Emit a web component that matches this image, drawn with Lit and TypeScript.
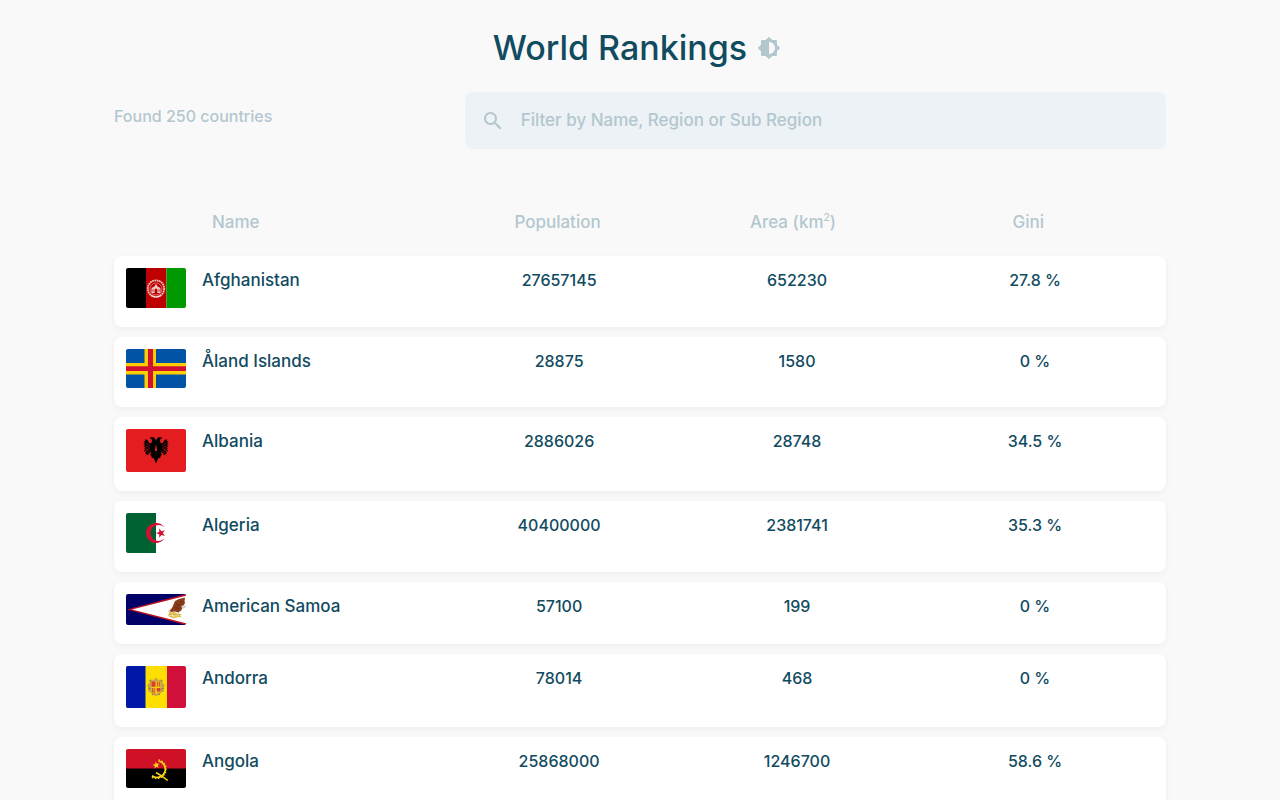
import { LitElement, html, css, svg, nothing, SVGTemplateResult } from "lit";
import { customElement, property, state } from "lit/decorators.js";

interface Country {
  name: string;
  region: string;
  population: number;
  area: number;
  gini: number;
  flagHeight: number;
  flag: SVGTemplateResult;
}

const star = (cx: number, cy: number, r: number, turn = 0): string =>
  Array.from({ length: 10 }, (_, i) => {
    const a = ((turn - 90 + i * 36) * Math.PI) / 180;
    const d = i % 2 ? r * 0.4 : r;
    return `${(cx + d * Math.cos(a)).toFixed(2)},${(cy + d * Math.sin(a)).toFixed(2)}`;
  }).join(" ");

const afghanistan = svg`
  <rect width="20" height="40" fill="#000"/>
  <rect x="20" width="20.4" height="40" fill="#bf0000"/>
  <rect x="40.4" width="19.6" height="40" fill="#009900"/>
  <circle cx="30" cy="20.6" r="8.2" fill="none" stroke="#eebfbb" stroke-width="1.8" stroke-dasharray="1.8 .5"/>
  <circle cx="30" cy="21" r="6" fill="none" stroke="#dc8a86" stroke-width=".8"/>
  <path d="M25.500 25v-4.500l1.500-1.500h1l2-3 2 3h1l1.500 1.500v4.500z" fill="#f0c9c5"/>
  <path d="M28.600 25v-3.500q1.400-2 2.800 0V25zM26.500 21.500h1v2h-1zM32.500 21.500h1v2h-1z" fill="#bf0000"/>
  <path d="M25 27.500q5 3 10 0" fill="none" stroke="#f6dedb" stroke-width="1.200"/>`;

const aland = svg`
  <rect width="60" height="39" fill="#0053a5"/>
  <path d="M18.500 0h11.500v14h30v11.500H30V39H18.500V25.500H0V14h18.500z" fill="#ffce00"/>
  <path d="M22 0h5v17.300h33v4.700H27v17h-5V22H0v-4.700h22z" fill="#d21034"/>`;

const eagleHalf = () => svg`
  <path d="M30.300 13l-1-3-1.300-1.600-2.500-.4-2 1.200 2 .6.600 2.200-1 2.500-2-.8-1.500-2.500-2.600-1.300.6 1.800-1.900.3 1.500 1.200-1.900.8 1.900.9-1.900 1 2 .7-1.800 1.200 2 .5-1.500 1.400 2 .1-2.400 2 1.200.6 3-2 .6.400-3.400 2.700 1.200.4-1 1.400 1.500-.2.200 1.400 1.300-1.200 2.300-2 .8.500-1.300 2.400 1.200.3.600 2.200 1.300.6.300 1z" fill="#000"/>
  <path d="M19.800 14.500l4.200 2M19.200 17.300l4.600 1M19.400 20.200l4.200-.4M21 24l3.800-2.200" stroke="#e41e20" stroke-width=".5" fill="none"/>`;

const albania = svg`
  <rect width="60" height="43" fill="#e41e20"/>
  ${eagleHalf()}
  <g transform="matrix(-1 0 0 1 60 0)">${eagleHalf()}</g>
  <path d="M28 22h4l.8 5-1.300 4-1.500 3.500-1.500-3.500-1.300-4z" fill="#000"/>`;

const algeria = svg`
  <rect width="60" height="40" fill="#fff"/>
  <rect width="30" height="40" fill="#006233"/>
  <path d="M38.300 14.400a10 10 0 1 0 0 11.200 8 8 0 1 1 0-11.200z" fill="#d21034"/>
  <polygon points="${star(34.8, 20.1, 5, -90)}" fill="#d21034"/>`;

const americanSamoa = svg`
  <rect width="60" height="31" fill="#006"/>
  <path d="M60 0v31L1 15.500z" fill="#bd1021"/>
  <path d="M60 1.800v27.400L6 15.500z" fill="#fff"/>
  <path d="M49 7l4-2 6-1.500-.5 3.500.5 2-2 3.500-1.500 3.500-3 2.500-4-1-3.500.5-1.500-1.500 2.500-2.500 1.500-3.500z" fill="#8a3b1c"/>
  <path d="M50 10l4 1.500M49 13.500l4 1M54 7.500l2 1.500" stroke="#5c2812" stroke-width=".8"/>
  <path d="M55 12.500l2.500-1.500 2 .8.300 1.800-2.800 1.200z" fill="#cfd2d8"/>
  <path d="M42 16l2.500 2.500 3-.7 3 1.700 5 .5-1.500 1.500 1.500 1.500-4 .3-4 1-4-1.500-1.500-2 1.500-1.300z" fill="#d9b53a"/>
  <path d="M43.500 21.500l5 .5 4.500-.3M46 18.500l1.500 5" stroke="#fff" stroke-width=".6" fill="none"/>`;

const andorra = svg`
  <rect width="60" height="42" fill="#d0103a"/>
  <rect width="41" height="42" fill="#fedf00"/>
  <rect width="19.500" height="42" fill="#0018a8"/>
  <path d="M24 13.500l3.500.5 2.500-2.500 2.500 2.500 3.500-.5.500 3.500 2.500 2-1.500 3 .5 3.500-3 1-1.500 2.500-3.500 1-3.500-1-1.500-2.500-3-1 .5-3.500-1.500-3 2.500-2z" fill="#c6a54c"/>
  <path d="M23.500 14l2 2M36.500 14l-2 2M22 22l2.500 1M38 22l-2.500 1M26 29l1.500-1.500M34 29l-1.500-1.500" stroke="#86744b" stroke-width="1"/>
  <path d="M25.500 15.500h9v9q-1 3-4.500 3.500-3.500-.5-4.500-3.500z" fill="#e9b626"/>
  <path d="M26 16h3.500v4.500H26zM26.500 22.200v4M28.200 22.200v5M31.500 16v4.500M33.500 16v4.500M31 22.500h3v2.500h-3z" fill="#d6442b" stroke="#d6442b" stroke-width=".9"/>
  <path d="M25.500 21.300h9M30 15.500v12" stroke="#fedf00" stroke-width=".7"/>`;

const angola = svg`
  <rect width="60" height="20" fill="#ce1126"/>
  <rect y="19.500" width="60" height="19.500" fill="#000"/>
  <path d="M32.500 12a8.300 8.300 0 1 1-6.500 14.800" fill="none" stroke="#f9d616" stroke-width="1.700"/>
  <path d="M32.500 10.800a9.500 9.500 0 1 1-7.500 17" fill="none" stroke="#f9d616" stroke-width="1.300" stroke-dasharray="1.500 1.600"/>
  <path d="M30 23.500q5.500 3 11.800 8" fill="none" stroke="#f9d616" stroke-width="1.500"/>
  <polygon points="${star(30.200, 16.200, 3.800, -10)}" fill="#f9d616"/>`;

const countries: Country[] = [
  { name: "Afghanistan", region: "Asia Southern Asia", population: 27657145, area: 652230, gini: 27.8, flagHeight: 40, flag: afghanistan },
  { name: "Åland Islands", region: "Europe Northern Europe", population: 28875, area: 1580, gini: 0, flagHeight: 39, flag: aland },
  { name: "Albania", region: "Europe Southern Europe", population: 2886026, area: 28748, gini: 34.5, flagHeight: 43, flag: albania },
  { name: "Algeria", region: "Africa Northern Africa", population: 40400000, area: 2381741, gini: 35.3, flagHeight: 40, flag: algeria },
  { name: "American Samoa", region: "Oceania Polynesia", population: 57100, area: 199, gini: 0, flagHeight: 31, flag: americanSamoa },
  { name: "Andorra", region: "Europe Southern Europe", population: 78014, area: 468, gini: 0, flagHeight: 42, flag: andorra },
  { name: "Angola", region: "Africa Middle Africa", population: 25868000, area: 1246700, gini: 58.6, flagHeight: 39, flag: angola },
];

type SortKey = "name" | "population" | "area" | "gini";

@customElement("search-input")
class SearchInput extends LitElement {
  static styles = css`
    :host {
      display: block;
    }
    .field {
      display: flex;
      align-items: center;
      gap: 16px;
      padding: 0 16px;
      border-radius: 8px;
      background: #ecf2f5;
      color: #b3c5cd;
    }
    .icon {
      flex: none;
      width: 24px;
      height: 24px;
      fill: currentColor;
    }
    .input {
      flex: 1;
      min-width: 0;
      padding: 16px 0 17px;
      border: 0;
      outline: 0;
      background: transparent;
      color: #114b5f;
      font: inherit;
      font-size: 17px;
      line-height: 24px;
      height: 57px;
      box-sizing: border-box;
    }
    .input::placeholder {
      color: #b3c7cf;
      opacity: 1;
    }
  `;

  render() {
    return html`
      <label class="field">
        <svg class="icon" viewBox="0 0 24 24" aria-hidden="true">
          <path d="M15.5 14h-.79l-.28-.27A6.471 6.471 0 0 0 16 9.500 6.500 6.500 0 1 0 9.500 16c1.610 0 3.090-.590 4.230-1.570l.270.280v.790l5 4.990L20.490 19l-4.990-5zm-6 0C7.010 14 5 11.990 5 9.500S7.010 5 9.500 5 14 7.010 14 9.500 11.990 14 9.500 14z"/>
        </svg>
        <input
          class="input"
          type="text"
          aria-label="Filter by Name, Region or Sub Region"
          placeholder="Filter by Name, Region or Sub Region"
          @input=${this.onInput}
        />
      </label>
    `;
  }

  private onInput(e: Event) {
    const value = (e.target as HTMLInputElement).value;
    this.dispatchEvent(new CustomEvent("filter", { detail: value }));
  }
}

@customElement("countries-table")
class CountriesTable extends LitElement {
  @property({ attribute: false }) rows: Country[] = [];
  @state() private key: SortKey | null = null;

  static styles = css`
    :host {
      display: block;
    }
    .table,
    .head,
    .body {
      display: block;
    }
    .headings,
    .row {
      display: grid;
      grid-template-columns: 33fr 25fr 25fr 25fr;
    }
    .headings {
      grid-template-columns: 4fr 3fr 3fr 3fr;
      padding: 0 20px 0 12px;
      margin-bottom: 22px;
    }
    .heading {
      padding: 0;
      font-weight: 500;
      text-align: center;
    }
    .heading.name {
      padding-left: 86px;
      text-align: left;
    }
    .sort {
      display: inline-block;
      vertical-align: top;
      padding: 0;
      border: 0;
      background: none;
      color: #b3c7cf;
      font: inherit;
      font-size: 17px;
      line-height: 24px;
      cursor: pointer;
    }
    .sup {
      font-size: 10px;
      line-height: 0;
    }
    .body {
      display: flex;
      flex-direction: column;
      gap: 10px;
    }
    .row {
      padding: 12px 12px 19px;
      border-radius: 8px;
      background: #fff;
      box-shadow: 0 2px 6px rgba(0, 0, 0, 0.05);
    }
    .cell {
      padding: 0;
      color: #114b5f;
      text-align: center;
    }
    .cell.name {
      display: flex;
      align-items: flex-start;
      gap: 16px;
      font-size: 17px;
      text-align: left;
    }
    .flag {
      flex: none;
      display: block;
      width: 60px;
      border-radius: 2px;
    }
  `;

  private heading(key: SortKey, label: unknown) {
    return html`<th class="heading ${key}" scope="col">
      <button class="sort" type="button" @click=${() => (this.key = key)}>${label}</button>
    </th>`;
  }

  render() {
    const key = this.key;
    const rows = key
      ? [...this.rows].sort((a, b) =>
          key === "name" ? a.name.localeCompare(b.name) : (b[key] as number) - (a[key] as number))
      : this.rows;
    return html`
      <table class="table" role="table">
        <thead class="head" role="rowgroup">
          <tr class="headings" role="row">
            ${this.heading("name", "Name")}
            ${this.heading("population", "Population")}
            ${this.heading("area", html`Area (km<sup class="sup">2</sup>)`)}
            ${this.heading("gini", "Gini")}
          </tr>
        </thead>
        <tbody class="body" role="rowgroup">
          ${rows.map((c) => html`
            <tr class="row" role="row">
              <td class="cell name">
                <svg class="flag" viewBox="0 0 60 ${c.flagHeight}" role="img" aria-label="${c.name}">${c.flag}</svg>
                <span>${c.name}</span>
              </td>
              <td class="cell">${c.population}</td>
              <td class="cell">${c.area}</td>
              <td class="cell">${c.gini} %</td>
            </tr>`)}
        </tbody>
      </table>
    `;
  }
}

@customElement("app-root")
class AppRoot extends LitElement {
  @state() private filter = "";

  static styles = css`
    :host {
      display: block;
      min-height: 100vh;
      background: #f9f9f9;
      color: #114b5f;
      font-family: "Inter", sans-serif;
      font-size: 16px;
      font-weight: 500;
      line-height: 24px;
    }
    .page {
      box-sizing: border-box;
      max-width: 1100px;
      margin: 0 auto;
      padding: 24px;
    }
    .header {
      display: flex;
      justify-content: center;
      align-items: center;
      gap: 10px;
      padding-right: 6px;
      margin-bottom: 20px;
    }
    .title {
      margin: 0;
      font-size: 34px;
      line-height: 48px;
      font-weight: 500;
    }
    .theme {
      display: flex;
      padding: 0;
      border: 0;
      background: none;
      color: #b3c7cf;
      cursor: pointer;
    }
    .theme-icon {
      width: 24px;
      height: 24px;
      fill: currentColor;
    }
    .toolbar {
      display: grid;
      grid-template-columns: 1fr 2fr;
      margin-bottom: 61px;
    }
    .count {
      margin: 0;
      padding-top: 12px;
      color: #b3c7cf;
    }
  `;

  render() {
    const q = this.filter.trim().toLowerCase();
    const rows = q
      ? countries.filter((c) => `${c.name} ${c.region}`.toLowerCase().includes(q))
      : countries;
    return html`
      <main class="page">
        <header class="header">
          <h1 class="title">World Rankings</h1>
          <button class="theme" type="button" aria-label="Switch theme">
            <svg class="theme-icon" viewBox="0 0 24 24" aria-hidden="true">
              <path d="M20 15.310l2.600-2.600a1 1 0 0 0 0-1.410L20 8.690V5a1 1 0 0 0-1-1h-3.690l-2.600-2.600a1 1 0 0 0-1.410 0L8.690 4H5a1 1 0 0 0-1 1v3.690l-2.600 2.600a1 1 0 0 0 0 1.410L4 15.300V19a1 1 0 0 0 1 1h3.690l2.600 2.600a1 1 0 0 0 1.410 0l2.600-2.600H19a1 1 0 0 0 1-1v-3.690zM12 18V6c3.310 0 6 2.690 6 6s-2.690 6-6 6z"/>
            </svg>
          </button>
        </header>
        <section class="toolbar">
          <p class="count">Found ${q ? rows.length : 250} countries</p>
          <search-input @filter=${(e: CustomEvent<string>) => (this.filter = e.detail)}></search-input>
        </section>
        ${rows.length ? html`<countries-table .rows=${rows}></countries-table>` : nothing}
      </main>
    `;
  }
}
